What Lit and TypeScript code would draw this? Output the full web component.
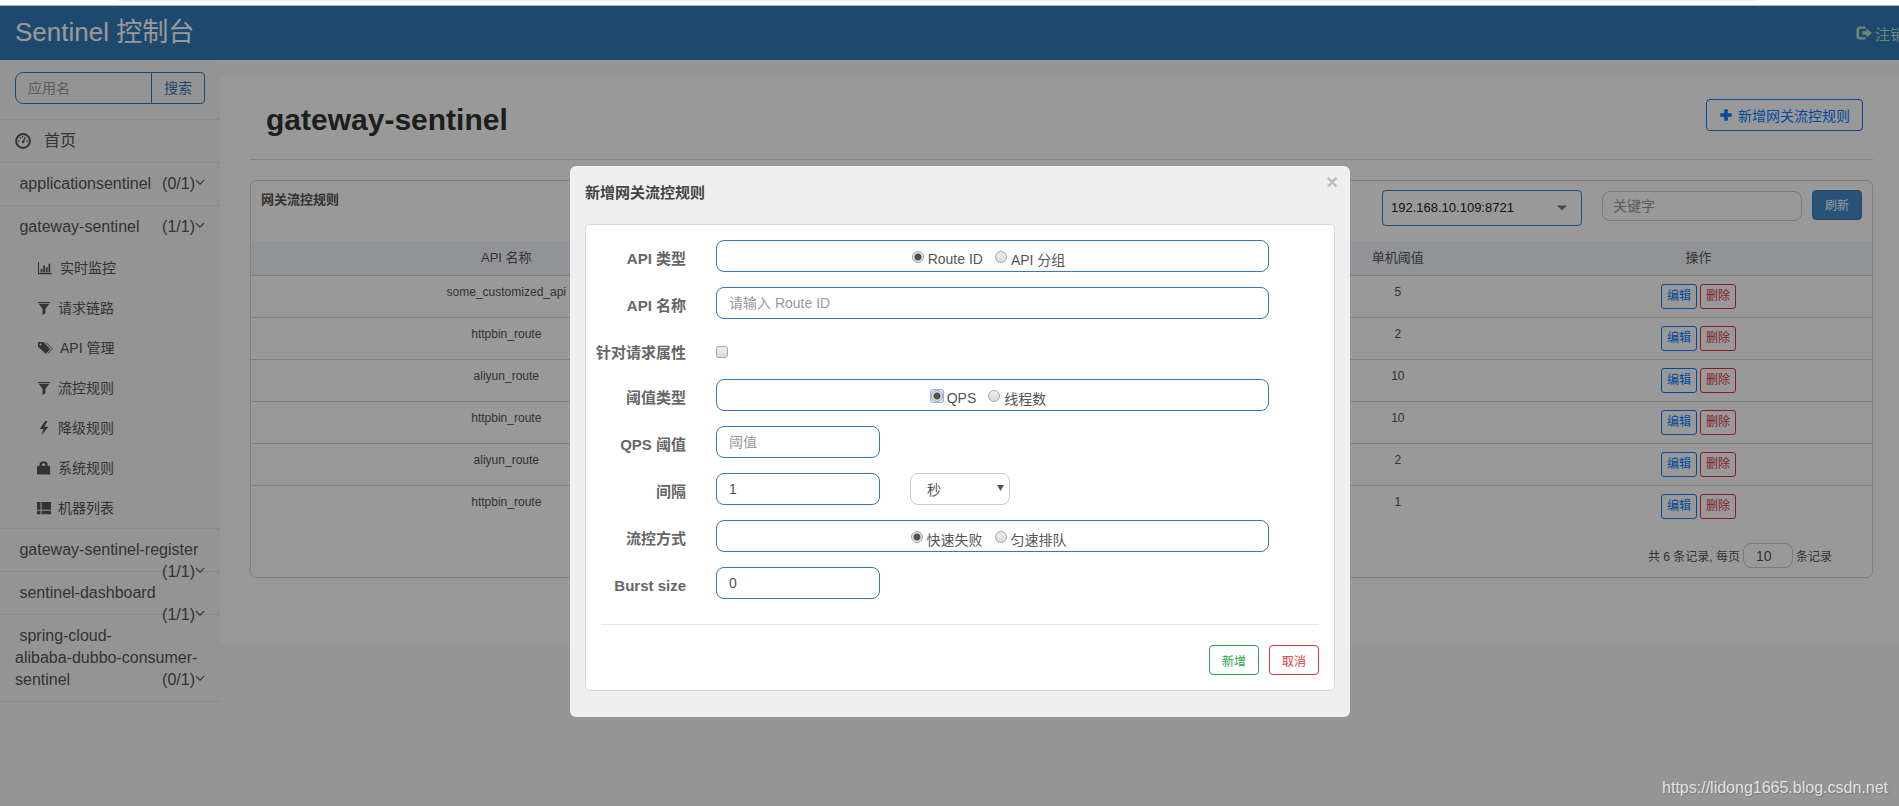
import { LitElement, html, css, svg, nothing } from "lit";
import { customElement } from "lit/decorators.js";
import { classMap } from "lit/directives/class-map.js";

const ICONS: Record<string, unknown> = {
  dashboard: svg`<circle cx="8" cy="8" r="6.9" fill="none" stroke="currentColor" stroke-width="2"/>
    <path d="M7.400 9.200 9.600 3.800l.9.4-1.500 5.500z"/><circle cx="8" cy="9" r="1.2"/>
    <path d="M3 7.600h1.600v1.200H3zM11.400 7.600H13v1.200h-1.600zM4.400 4.600l.9-.8 1 1.200-.8.7zM7 3h1.200v1.400H7z"/>`,
  chart: svg`<path d="M0 1h1.2v12.8H16V15H0zM3 9h2v4H3zM6 5h2v8H6zM9 7h2v6H9zM12 3h2v10h-2z"/>`,
  filter: svg`<path d="M1 1h14v1.2H1zM2 3.2h12L9.6 9v5l-3.2 2V9z"/>`,
  tags: svg`<path d="M0 2.2C0 1.5.5 1 1.2 1H6l8 8.200-5 5.300L0 6.500zM3 2.800a1.200 1.200 0 1 0 0 2.400 1.200 1.200 0 0 0 0-2.400z" fill-rule="evenodd"/>
    <path d="M9 1.500 16.300 9l-5 5.300" fill="none" stroke="currentColor" stroke-width="1"/>`,
  flash: svg`<path d="M9.500 0 3 9h4l-1.500 7L13 6.500H8.600L12 0z"/>`,
  lock: svg`<path d="M1.500 5.500H3V3.500C3 1.500 4.300.500 6 .500h3c1.700 0 3 1 3 3v2h1.500c.9 0 1.500.6 1.500 1.500v8.500H0V7c0-.9.6-1.500 1.500-1.500zm4 0h4V3.600c0-.4-.3-.7-.7-.7H6.200c-.4 0-.7.3-.7.7z" fill-rule="evenodd"/>`,
  list: svg`<path d="M0 1h4v9H0zM5.200 1H16v9H5.200zM0 11.200h4V15H0zM5.200 11.200H16V15H5.200z"/>`,
  logout: svg`<path d="M9.500 1.500H4a3.500 3.500 0 0 0-3.500 3.500v6A3.500 3.500 0 0 0 4 14.500h5.500v-2.300H4.500c-1 0-1.500-.6-1.500-1.500V5.300c0-.9.5-1.500 1.500-1.500h5zM10.500 3.500 16 8l-5.500 4.500v-2.800H6.500V6.300h4z"/>`,
  plus: svg`<path d="M6 1.500h4V6h4.500v4H10v4.500H6V10H1.500V6H6z"/>`,
  chevron: svg`<path d="m1.500 5 6.500 6.500L14.500 5" fill="none" stroke="currentColor" stroke-width="2"/>`,
  caret: svg`<path d="M0 4h16l-8 8z"/>`,
};

const icon = (name: string, cls = "") =>
  html`<svg class="icon ${cls}" viewBox="0 0 16 16" fill="currentColor" aria-hidden="true">${ICONS[name]}</svg>`;

const base = css`
  *, *::before, *::after { box-sizing: border-box; }
  a { color: inherit; text-decoration: none; }
  button, input, select { font: inherit; color: inherit; margin: 0; }
  button { cursor: pointer; }
  .icon { width: 14px; height: 14px; flex: none; }
  .field {
    height: 32px; padding: 0 12px; font-size: 14px; color: #555;
    background: #fff; border: 1px solid #337ab7; border-radius: 8px; outline: none;
  }
  .field::placeholder { color: #999; opacity: 1; }
`;

@customElement("side-bar")
class SideBar extends LitElement {
  static styles = [base, css`
    :host { display: block; width: 220px; flex: none; background: #f7f7f7; color: #555; font-size: 16px; line-height: 22px; }
    .search { display: flex; padding: 12px 15px 15px; border-bottom: 1px solid #e7e7e7; }
    .search .field { flex: 1; min-width: 0; border-radius: 8px 0 0 8px; background: transparent; }
    .search button {
      width: 54px; margin-left: -1px; font-size: 14px; color: #337ab7; padding: 0;
      background: transparent; border: 1px solid #337ab7; border-radius: 0 4px 4px 0;
    }
    ul { list-style: none; margin: 0; padding: 0; }
    .entry { border-bottom: 1px solid #e7e7e7; }
    .link { display: block; padding: 10px 15px; }
    .home { display: flex; align-items: center; gap: 13px; }
    .home .icon { width: 16px; height: 16px; }
    .count { float: right; display: flex; align-items: center; height: 22px; }
    .count .icon { width: 10px; height: 10px; margin-bottom: 4px; }
    .sub { display: flex; align-items: center; gap: 7px; height: 40px; padding-left: 37px; font-size: 14px; }
    .wide { width: 16px; }
  `];

  apps = [
    { name: "applicationsentinel", count: "(0/1)" },
    { name: "gateway-sentinel", count: "(1/1)", open: true },
    { name: "gateway-sentinel-register", count: "(1/1)" },
    { name: "sentinel-dashboard", count: "(1/1)" },
    { name: "spring-cloud-alibaba-dubbo-consumer-sentinel", count: "(0/1)" },
  ];
  menu = [
    ["chart", "实时监控"], ["filter", "请求链路"], ["tags", "API 管理"], ["filter", "流控规则"],
    ["flash", "降级规则"], ["lock", "系统规则"], ["list", "机器列表"],
  ];

  render() {
    return html`
      <div class="search">
        <input class="field" type="text" placeholder="应用名" aria-label="应用名" />
        <button type="button">搜索</button>
      </div>
      <ul>
        <li class="entry"><a class="link home" href="#">${icon("dashboard")}<span>首页</span></a></li>
        ${this.apps.map((a) => html`
          <li class="entry">
            <a class="link" href="#">&nbsp;${a.name}<span class="count">${a.count}${icon("chevron")}</span></a>
            ${a.open ? html`<ul>${this.menu.map(([i, t]) => html`
              <li><a class="sub" href="#">${icon(i, i === "chart" || i === "tags" ? "wide" : "")}<span>${t}</span></a></li>`)}</ul>` : nothing}
          </li>`)}
      </ul>`;
  }
}

@customElement("rule-page")
class RulePage extends LitElement {
  static styles = [base, css`
    :host { display: block; flex: 1; min-width: 0; align-self: flex-start; margin-top: 17px; padding: 0 47px 67px 30px; background: #fff; }
    .top { display: flex; justify-content: space-between; align-items: flex-start; padding: 22px 10px 22px 16px; border-bottom: 1px solid #ddd; }
    h1 { margin: 0; padding-top: 4px; font-size: 30px; line-height: 34px; font-weight: 700; color: #333; }
    .add {
      display: flex; align-items: center; gap: 5px; height: 32px; padding: 0 12px;
      font-size: 14px; color: #007bff; background: transparent; border: 1px solid #007bff; border-radius: 4px;
    }
    .card { margin-top: 20px; border: 1px solid #d6d6d6; border-radius: 6px; color: #555; overflow: hidden; }
    .bar { display: flex; align-items: flex-start; padding: 9px 10px 15px; }
    .bar h2 { flex: 1; margin: 0; font-size: 13px; line-height: 20px; font-weight: 700; }
    .machine { display: grid; width: 200px; margin-right: 20px; }
    .machine select {
      grid-area: 1 / 1; appearance: none; height: 36px; padding: 0 8px 2px; font-size: 13px; color: #222;
      background: transparent; border: 1px solid #337ab7; border-radius: 4px;
    }
    .machine .icon { grid-area: 1 / 1; align-self: center; justify-self: end; width: 10px; height: 10px; margin-right: 15px; color: #777; }
    .key { width: 200px; height: 30px; padding: 0 10px; border-color: #ccc; margin: 1px 10px 0 0; }
    .refresh { width: 50px; height: 30px; padding: 0 0 2px; font-size: 12px; color: #fff; background: #428bca; border: 1px solid #357ebd; border-radius: 4px; }
    table { width: 100%; border-collapse: collapse; table-layout: fixed; font-size: 12px; line-height: 17px; text-align: center; }
    .c1 { width: 31.5%; } .c2 { width: 15.7%; } .c3 { width: 21.4%; }
    th { height: 34px; padding: 0; font-size: 13px; font-weight: 400; background: #f3f6fa; }
    td { height: 42px; padding: 8px 0; vertical-align: top; border-top: 1px solid #d6d6d6; }
    .acts { display: flex; justify-content: center; gap: 3px; }
    .acts button { width: 36px; height: 25px; padding: 0; font-size: 12px; background: transparent; border: 1px solid; border-radius: 3px; }
    .edit { color: #007bff; } .del { color: #dc3545; }
    .pager { display: flex; justify-content: flex-end; align-items: center; gap: 3px; padding: 16px 40px 9px 0; font-size: 12px; }
    .pager .field { width: 50px; height: 25px; border-color: #ccc; }
  `];

  rows = [
    ["some_customized_api", 5], ["httpbin_route", 2], ["aliyun_route", 10],
    ["httpbin_route", 10], ["aliyun_route", 2], ["httpbin_route", 1],
  ];

  render() {
    return html`
      <div class="top">
        <h1>gateway-sentinel</h1>
        <button class="add" type="button">${icon("plus")}<span>新增网关流控规则</span></button>
      </div>
      <section class="card">
        <div class="bar">
          <h2>网关流控规则</h2>
          <div class="machine">
            <select aria-label="机器"><option>192.168.10.109:8721</option></select>${icon("caret")}
          </div>
          <input class="field key" type="text" placeholder="关键字" aria-label="关键字" />
          <button class="refresh" type="button">刷新</button>
        </div>
        <table>
          <colgroup><col class="c1" /><col class="c2" /><col class="c2" /><col class="c2" /><col class="c3" /></colgroup>
          <thead><tr><th>API 名称</th><th></th><th></th><th>单机阈值</th><th>操作</th></tr></thead>
          <tbody>
            ${this.rows.map(([name, n]) => html`
              <tr><td>${name}</td><td></td><td></td><td>${n}</td>
                <td><div class="acts"><button class="edit" type="button">编辑</button><button class="del" type="button">删除</button></div></td>
              </tr>`)}
          </tbody>
        </table>
        <div class="pager">
          <label for="size">共 6 条记录, 每页</label><input id="size" class="field" type="text" value="10" /><span>条记录</span>
        </div>
      </section>`;
  }
}

@customElement("rule-dialog")
class RuleDialog extends LitElement {
  static styles = [base, css`
    :host { display: block; width: 780px; padding: 0 15px 26px; background: #efefef; border-radius: 6px; color: #555; }
    header { display: flex; justify-content: space-between; height: 58px; }
    h2 { margin: 16px 0 0; font-size: 15px; line-height: 22px; font-weight: 700; color: #444; }
    .close { height: 20px; margin-top: 6px; padding: 0; border: 0; background: none; font-size: 20px; line-height: 20px; font-weight: 700; color: #bbb; margin-right: -3px; }
    form { background: #fff; border: 1px solid #d8d8d8; border-radius: 5px; padding: 15px 0; }
    .row { display: grid; grid-template-columns: 100px 1fr; column-gap: 30px; padding-right: 65px; margin-bottom: 15px; min-height: 30px; }
    .name { text-align: right; font-size: 15px; line-height: 22px; font-weight: 700; color: #666; padding-top: 8px; white-space: nowrap; }
    .line { display: flex; gap: 30px; }
    .line > .field { width: 164px; }
    .choices { display: flex; justify-content: center; align-items: center; gap: 12px; padding: 6px 20px 0 12px; }
    .choices label { display: flex; align-items: center; gap: 4px; }
    .radio, .check {
      appearance: none; width: 12px; height: 12px; border: 1px solid #a5a5a5;
      background: linear-gradient(#eee, #dcdcdc); flex: none;
    }
    .mark { display: grid; margin-bottom: 4px; border-radius: 2px; }
    .radio { border-radius: 50%; outline: none; }
    .radio:checked { background: radial-gradient(circle, #505050 0 3px, #e4e4e4 4px); }
    .focused { background: #dbe7fc; box-shadow: 0 0 0 1px #8db4f5; }
    .check { border-radius: 3px; margin-top: 12px; }
    .unit { display: grid; width: 100px; }
    .unit select { grid-area: 1 / 1; appearance: none; width: 100%; padding: 2px 16px 0; border-color: #ccc; }
    .unit .icon { grid-area: 1 / 1; align-self: center; justify-self: end; width: 7px; height: 10px; margin-right: 6px; }
    footer { display: flex; justify-content: flex-end; gap: 10px; margin: 25px 15px 0; padding-top: 20px; border-top: 1px solid #e3e3e3; }
    footer button { width: 50px; height: 30px; padding: 0; font-size: 12px; background: #fff; border: 1px solid; border-radius: 4px; }
    .ok { color: #28a745; } .cancel { color: #dc3545; }
  `];

  private choices(group: string, name: string, options: string[], focused = false) {
    return html`<div class="row">
      <span class="name" id=${group}>${name}</span>
      <div class="field choices" role="radiogroup" aria-labelledby=${group}>
        ${options.map((o, i) => html`<label><span class=${classMap({ mark: true, focused: focused && i === 0 })}><input
          class="radio" type="radio" name=${group} ?checked=${i === 0} /></span><span>${o}</span></label>`)}
      </div>
    </div>`;
  }

  render() {
    return html`
      <header><h2>新增网关流控规则</h2><button class="close" type="button" aria-label="关闭">×</button></header>
      <form>
        ${this.choices("kind", "API 类型", ["Route ID", "API 分组"])}
        <div class="row"><label class="name" for="api">API 名称</label><input id="api" class="field" type="text" placeholder="请输入 Route ID" /></div>
        <div class="row"><label class="name" for="attr">针对请求属性</label><div><input id="attr" class="check" type="checkbox" /></div></div>
        ${this.choices("grade", "阈值类型", ["QPS", "线程数"], true)}
        <div class="row"><label class="name" for="limit">QPS 阈值</label><div class="line"><input id="limit" class="field" type="text" placeholder="阈值" /></div></div>
        <div class="row"><label class="name" for="interval">间隔</label>
          <div class="line"><input id="interval" class="field" type="text" value="1" />
            <div class="unit"><select class="field" aria-label="间隔单位"><option>秒</option></select>
              <svg class="icon" viewBox="0 0 7 10" fill="currentColor" aria-hidden="true"><path d="M0 1h7L3.500 7z"/></svg></div>
          </div></div>
        ${this.choices("mode", "流控方式", ["快速失败", "匀速排队"])}
        <div class="row"><label class="name" for="burst">Burst size</label><div class="line"><input id="burst" class="field" type="text" value="0" /></div></div>
        <footer><button class="ok" type="button">新增</button><button class="cancel" type="button">取消</button></footer>
      </form>`;
  }
}

@customElement("app-root")
class AppRoot extends LitElement {
  static styles = [base, css`
    :host {
      display: flex; flex-direction: column; height: 100vh; overflow: hidden; background: #f8f8f8;
      font-family: "Liberation Sans", Arial, "Noto Sans CJK SC", sans-serif; font-size: 14px;
    }
    .strip { height: 6px; flex: none; background: #fff; border-bottom: 1px solid #b4b4b4; padding: 0 142px 0 118px; }
    .strip::before { content: ""; display: block; height: 1px; background: #f1f1f1; }
    .page { position: relative; flex: 1; min-height: 0; width: calc(100% + 21px); }
    .nav { display: flex; justify-content: space-between; align-items: center; height: 54px; padding: 0 15px; background: #337ab7; color: #fff; }
    .brand { font-size: 26px; line-height: 32px; padding-bottom: 2px; }
    .logout { display: flex; align-items: center; gap: 3px; font-size: 15px; color: #b4e0c8; }
    .logout .icon { width: 16px; height: 16px; }
    .body { display: flex; }
    .shade { position: absolute; inset: 0; display: flex; justify-content: center; align-items: flex-start; padding-top: 160px; background: rgba(0, 0, 0, 0.4); }
    .mark { position: absolute; right: 32px; bottom: 8px; font-size: 16px; line-height: 20px; color: #e2e2e2; text-shadow: 1px 1px 1px #777; }
  `];

  render() {
    return html`
      <div class="strip"></div>
      <div class="page">
        <header class="nav">
          <a class="brand" href="#">Sentinel 控制台</a>
          <a class="logout" href="#">${icon("logout")}<span>注销</span></a>
        </header>
        <div class="body"><side-bar></side-bar><rule-page></rule-page></div>
        <div class="shade"><rule-dialog role="dialog" aria-modal="true"></rule-dialog></div>
        <span class="mark">https://lidong1665.blog.csdn.net</span>
      </div>`;
  }
}
